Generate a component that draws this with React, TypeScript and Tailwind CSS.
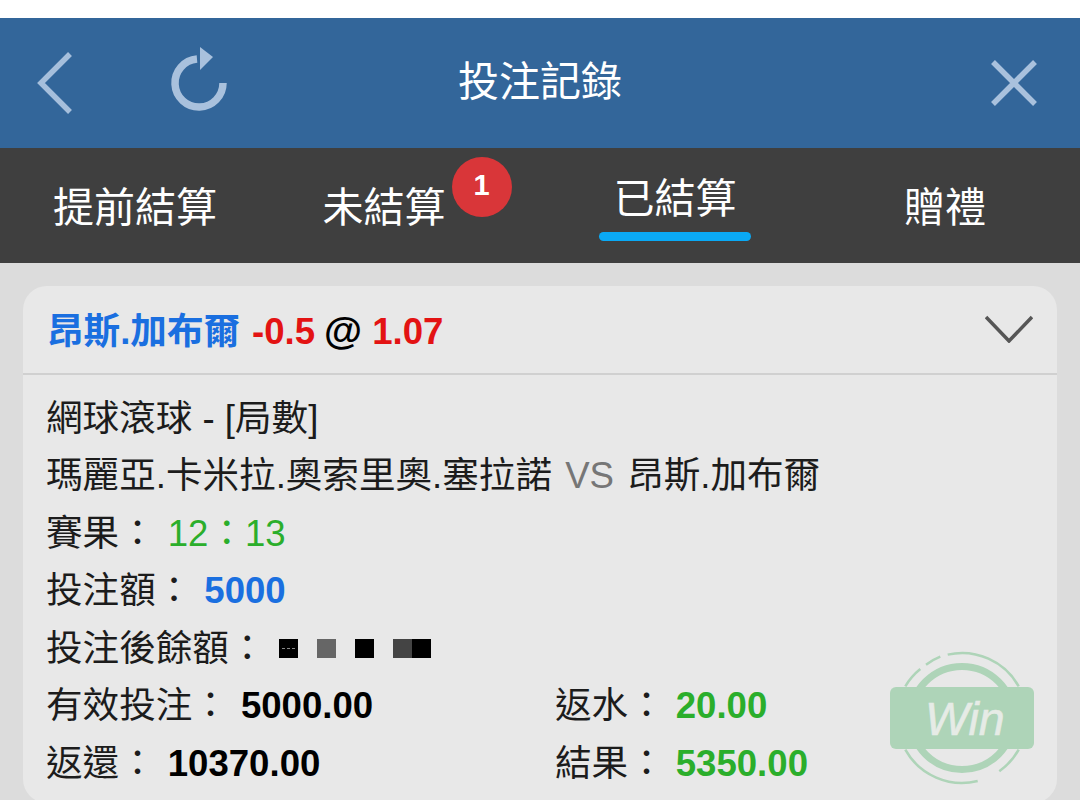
const tabs = [
  { label: '提前結算' },
  { label: '未結算', badge: 1 },
  { label: '已結算', active: true },
  { label: '贈禮' },
];

function WinStamp() {
  return (
    <svg className="absolute left-[867px] top-[364px]" width="154" height="136" viewBox="0 0 154 136" fill="none">
      <circle cx="72" cy="68" r="51.5" stroke="#aed4b8" strokeWidth="7" />
      <g stroke="#aed4b8" strokeWidth="2.5">
        <path d="M15.3 36.3 A65 65 0 0 1 30.3 19" />
        <path d="M36 14.7 A65 65 0 0 1 50.3 6.7" />
        <path d="M57.7 4.6 A65 65 0 0 1 128.7 36.3" />
        <path d="M15.3 99.7 A65 65 0 0 0 87.7 131" />
        <path d="M109.3 121.2 A65 65 0 0 0 128.7 99.7" />
      </g>
      <rect x="0" y="37" width="144" height="62" rx="6" fill="#aed4b8" />
      <text x="35" y="85" fontSize="46.5" fontStyle="italic" fill="#e6ebe6" stroke="#e6ebe6" strokeWidth="0.6" fontFamily="Liberation Sans, sans-serif">
        Win
      </text>
    </svg>
  );
}

export default function App() {
  return (
    <div className="h-[800px] overflow-hidden bg-white pt-[18px] [font-family:'Liberation_Sans','Noto_Sans_CJK_TC',sans-serif]">
      <header className="grid h-[130px] grid-cols-3 items-center bg-[#33669a] px-[37px]">
        <div className="flex items-center gap-[97px]">
          <svg width="36" height="64" viewBox="0 0 36 64" fill="none" stroke="#a6bfdc" strokeWidth="5.5">
            <path d="M33 3 L4 32 L33 61" />
          </svg>
          <svg width="60" height="72" viewBox="0 0 60 72" fill="none">
            <path d="M27 12.1 A24 24 0 1 0 53 36" stroke="#a9c1dd" strokeWidth="7.5" />
            <path d="M30 0 L43 10 L30 23 Z" fill="#a9c1dd" />
          </svg>
        </div>
        <h1 className="text-center text-[41px] font-normal text-white">投注記錄</h1>
        <div className="flex justify-end pr-[6px]">
          <svg width="46" height="46" viewBox="0 0 46 46" fill="none" stroke="#a9c1dd" strokeWidth="5.5">
            <path d="M2 2 L44 44 M44 2 L2 44" />
          </svg>
        </div>
      </header>

      <nav className="grid h-[115px] grid-cols-4 bg-[#3f3f3f] text-[41px] text-white">
        {tabs.map((tab) => (
          <div key={tab.label} className="relative flex items-center justify-center">
            {tab.active ? (
              <div className="flex flex-col items-center">
                <span className="leading-[56px]">{tab.label}</span>
                <span className="mt-[5px] h-[9px] w-[152px] rounded-full bg-[#0aa9f5]" />
              </div>
            ) : (
              <span className={tab.badge ? 'relative mr-[42px] mt-[7px]' : 'mt-[7px]'}>
                {tab.label}
                {tab.badge && (
                  <span className="absolute left-[129px] top-[-21px] flex h-[60px] w-[60px] items-center justify-center rounded-full bg-[#d93639] pb-[4px] text-[29px] font-bold leading-none">
                    {tab.badge}
                  </span>
                )}
              </span>
            )}
          </div>
        ))}
      </nav>

      <main className="min-h-[600px] bg-[#dcdcdc] px-[23px] pt-[23px]">
        <section className="relative rounded-[24px] bg-[#e8e8e8] text-[36.6px] text-[#1c1c1c]">
          <div className="flex h-[89px] items-center justify-between border-b-[2px] border-[#d0d0d0] pl-[24px] pr-[24px] font-bold">
            <div className="flex items-baseline gap-[12px] pt-[2px] leading-none">
              <span className="text-[#1a6fe0]">昂斯.加布爾</span>
              <span className="text-[#e31313]">-0.5</span>
              <span className="ml-[-3px] mr-[-2px] text-[39px] text-black">@</span>
              <span className="text-[#e31313]">1.07</span>
            </div>
            <svg className="mb-[2px]" width="48" height="28" viewBox="0 0 48 28" fill="none" stroke="#565656" strokeWidth="3.5">
              <path d="M1 2 L24 26 L47 2" />
            </svg>
          </div>

          <div className="pb-[10px] pl-[23px] pt-[14.5px] leading-[57.6px]">
            <div>網球滾球 - [局數]</div>
            <div>
              瑪麗亞.卡米拉.奧索里奧.塞拉諾 <span className="mx-[3px] text-[#767676]">VS</span> 昂斯.加布爾
            </div>
            <div className="flex gap-[12px]">
              <span>賽果：</span>
              <span className="text-[#2bae2b]">12：13</span>
            </div>
            <div className="flex gap-[12px]">
              <span>投注額：</span>
              <span className="font-bold text-[#1a6fe0]">5000</span>
            </div>
            <div className="flex items-center gap-[14px]">
              <span>投注後餘額：</span>
              <div className="flex gap-[19px]">
                <span className="flex h-[19px] w-[19px] items-center justify-center bg-black">
                  <span className="h-[1px] w-[13px] border-t border-dashed border-[#888888]" />
                </span>
                <span className="h-[19px] w-[19px] bg-[#666666]" />
                <span className="h-[19px] w-[19px] bg-black" />
                <span className="flex">
                  <span className="h-[19px] w-[19px] bg-[#444444]" />
                  <span className="h-[19px] w-[19px] bg-black" />
                </span>
              </div>
            </div>
            <div className="grid grid-cols-[509px_1fr]">
              <div className="flex gap-[12px]">
                <span>有效投注：</span>
                <span className="font-bold text-black">5000.00</span>
              </div>
              <div className="flex gap-[11px]">
                <span>返水：</span>
                <span className="font-bold text-[#2bae2b]">20.00</span>
              </div>
            </div>
            <div className="grid grid-cols-[509px_1fr]">
              <div className="flex gap-[12px]">
                <span>返還：</span>
                <span className="font-bold text-black">10370.00</span>
              </div>
              <div className="flex gap-[11px]">
                <span>結果：</span>
                <span className="font-bold text-[#2bae2b]">5350.00</span>
              </div>
            </div>
          </div>
          <WinStamp />
        </section>
      </main>
    </div>
  );
}
